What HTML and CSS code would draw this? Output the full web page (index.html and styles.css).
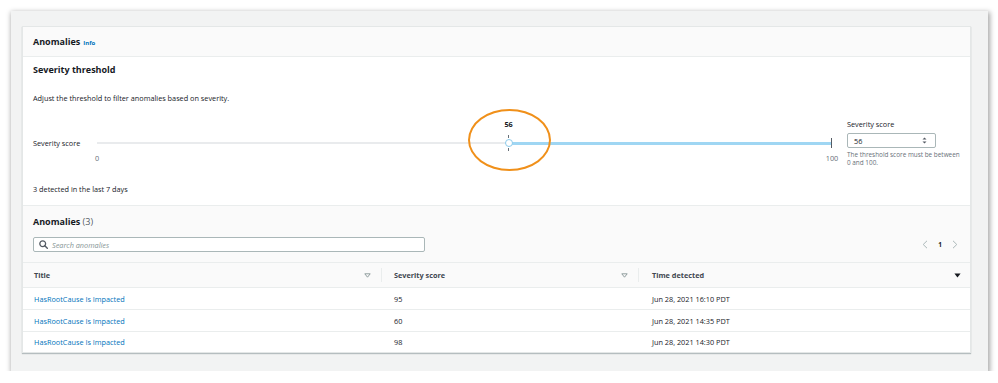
FILE: index.html
```html
<!DOCTYPE html>
<html lang="en">
<head>
    <meta charset="UTF-8">
    <meta name="viewport" content="width=device-width, initial-scale=1.0">
    <title>Anomalies</title>
    <link rel="stylesheet" href="styles.css">
</head>
<body>
    <div class="frame">
        <div class="card">
            <div class="card-header">
                <h2>Anomalies</h2>
                <a href="#" class="info">Info</a>
            </div>

            <div class="threshold">
                <h3>Severity threshold</h3>
                <p class="desc">Adjust the threshold to filter anomalies based on severity.</p>

                <div class="slider-row">
                    <div class="slider-label">Severity score</div>
                    <div class="slider">
                        <div class="value-row">
                            <span class="value" style="left: 56%;">56</span>
                        </div>
                        <div class="track">
                            <div class="track-fill" style="left: 56%;"></div>
                            <div class="thumb" style="left: 56%;"></div>
                            <div class="callout" style="left: 56%;"></div>
                        </div>
                        <div class="ends">
                            <span class="min">0</span>
                            <span class="max">100</span>
                        </div>
                    </div>
                    <div class="score-field">
                        <label>Severity score</label>
                        <div class="number-input">
                            <span>56</span>
                            <svg width="5" height="7" viewBox="0 0 5 7">
                                <path d="M2.5 0.5 L4.5 2.6 H0.5 Z M2.5 6.5 L4.5 4.4 H0.5 Z" fill="#545b64"/>
                            </svg>
                        </div>
                        <p class="hint">The threshold score must be between 0 and 100.</p>
                    </div>
                </div>

                <p class="detected">3 detected in the last 7 days</p>
            </div>

            <div class="table-tools">
                <h2>Anomalies <span class="count">(3)</span></h2>
                <div class="tools-row">
                    <div class="search">
                        <svg width="9" height="9" viewBox="0 0 9 9">
                            <circle cx="3.7" cy="3.7" r="2.9" fill="none" stroke="#545b64" stroke-width="1.3"/>
                            <path d="M5.8 5.8 L8.3 8.3" stroke="#545b64" stroke-width="1.4" stroke-linecap="round"/>
                        </svg>
                        <span>Search anomalies</span>
                    </div>
                    <div class="pager">
                        <svg width="6" height="9" viewBox="0 0 6 9"><path d="M5 0.8 L1.2 4.5 L5 8.2" fill="none" stroke="#aab7b8" stroke-width="1"/></svg>
                        <span>1</span>
                        <svg width="6" height="9" viewBox="0 0 6 9"><path d="M1 0.8 L4.8 4.5 L1 8.2" fill="none" stroke="#aab7b8" stroke-width="1"/></svg>
                    </div>
                </div>
            </div>

            <div class="grid">
                <div class="grid-row grid-head">
                    <div class="th">Title
                        <svg width="7" height="5" viewBox="0 0 7 5"><path d="M0.8 0.8 H6.2 L3.5 4.2 Z" fill="none" stroke="#879596" stroke-width="0.9"/></svg>
                    </div>
                    <div class="th">Severity score
                        <svg width="7" height="5" viewBox="0 0 7 5"><path d="M0.8 0.8 H6.2 L3.5 4.2 Z" fill="none" stroke="#879596" stroke-width="0.9"/></svg>
                    </div>
                    <div class="th last">Time detected
                        <svg width="7" height="5" viewBox="0 0 7 5"><path d="M0.4 0.4 H6.6 L3.5 4.6 Z" fill="#16191f"/></svg>
                    </div>
                </div>
                <div class="grid-row">
                    <a href="#">HasRootCause Is Impacted</a>
                    <span>95</span>
                    <span>Jun 28, 2021 16:10 PDT</span>
                </div>
                <div class="grid-row">
                    <a href="#">HasRootCause Is Impacted</a>
                    <span>60</span>
                    <span>Jun 28, 2021 14:35 PDT</span>
                </div>
                <div class="grid-row">
                    <a href="#">HasRootCause Is Impacted</a>
                    <span>98</span>
                    <span>Jun 28, 2021 14:30 PDT</span>
                </div>
            </div>
        </div>
    </div>
</body>
</html>
```

FILE: styles.css
```css
body {
    margin: 0;
    background: #fff;
    font-family: "Open Sans", Arial, sans-serif;
    color: #16191f;
    font-size: 7.3px;
}
a {
    color: #0073bb;
    text-decoration: none;
}
h2, h3, p {
    margin: 0;
}
.frame {
    box-sizing: border-box;
    width: 977px;
    height: 360px;
    margin: 11px 0 0 11px;
    padding: 15px 17px 18px 11px;
    background: #f2f3f3;
    box-shadow: 1px 2px 5px 1px rgba(0, 0, 0, 0.35);
}
.card {
    box-sizing: border-box;
    height: 327px;
    background: #fff;
    border: 1px solid #e4e7e7;
    box-shadow: 0 1px 1px rgba(0, 28, 36, 0.25);
}
.card-header {
    box-sizing: border-box;
    height: 30px;
    display: flex;
    align-items: center;
    gap: 3px;
    padding: 1px 10px 0;
    background: #fafafa;
    border-bottom: 1px solid #eaeded;
}
h2 {
    font-size: 9px;
    font-weight: 700;
    line-height: 14px;
}
.info {
    font-size: 6px;
    font-weight: 700;
    padding-top: 2px;
}
.threshold {
    box-sizing: border-box;
    height: 149px;
    padding: 6px 11px 0 10px;
    border-bottom: 1px solid #eaeded;
}
h3 {
    font-size: 9px;
    font-weight: 700;
    line-height: 14px;
}
.desc {
    margin-top: 15px;
    line-height: 12px;
}
.slider-row {
    display: flex;
    height: 58px;
    margin-top: 10px;
}
.slider-label {
    flex: 0 0 64px;
    align-self: center;
    line-height: 12px;
}
.slider {
    flex: 0 0 735px;
    display: flex;
    flex-direction: column;
}
.value-row {
    position: relative;
    height: 20px;
}
.value {
    position: absolute;
    top: 4px;
    transform: translateX(-50%);
    font-weight: 700;
    line-height: 12px;
}
.track {
    position: relative;
    height: 18px;
}
.track::before {
    content: "";
    position: absolute;
    left: 0;
    right: 0;
    top: 8px;
    height: 2px;
    background: #e9ebed;
}
.track::after {
    content: "";
    position: absolute;
    right: 0;
    top: 4px;
    width: 1.5px;
    height: 10px;
    background: #545b64;
}
.track-fill {
    position: absolute;
    right: 0;
    top: 7.5px;
    height: 3px;
    background: #9fd6f3;
}
.thumb {
    position: absolute;
    top: 5px;
    width: 6px;
    height: 6px;
    margin-left: -4px;
    border: 1px solid #8ccbec;
    border-radius: 50%;
    background: #fff;
}
.thumb::before,
.thumb::after {
    content: "";
    position: absolute;
    left: 2.5px;
    width: 1px;
    height: 3px;
    background: #687078;
}
.thumb::before {
    top: -5px;
}
.thumb::after {
    bottom: -5px;
}
.callout {
    position: absolute;
    top: -25px;
    width: 79px;
    height: 58px;
    margin-left: -41px;
    border: 2px solid #f0901a;
    border-radius: 50%;
}
.ends {
    display: flex;
    justify-content: space-between;
    height: 12px;
    line-height: 12px;
    color: #687078;
}
.ends .min {
    transform: translateX(-50%);
}
.ends .max {
    transform: translateX(50%);
}
.score-field {
    flex: 0 0 113px;
    margin-left: 15px;
    padding-top: 4px;
}
.score-field label {
    display: block;
    line-height: 12px;
}
.number-input {
    box-sizing: border-box;
    width: 89px;
    height: 15px;
    margin-top: 3px;
    display: flex;
    align-items: center;
    justify-content: space-between;
    padding: 0 8px 0 6px;
    border: 1px solid #aab7b8;
    border-radius: 2px;
}
.hint {
    margin-top: 3px;
    font-size: 6.4px;
    line-height: 8px;
    color: #687078;
}
.detected {
    margin-top: 11px;
    line-height: 12px;
}
.table-tools {
    box-sizing: border-box;
    height: 56px;
    padding: 9px 12px 0 10px;
    background: #fafafa;
}
.count {
    font-weight: 400;
    color: #545b64;
}
.tools-row {
    display: flex;
    align-items: center;
    justify-content: space-between;
    margin-top: 8px;
}
.search {
    box-sizing: border-box;
    width: 392px;
    height: 15px;
    display: flex;
    align-items: center;
    gap: 4px;
    padding-left: 5px;
    background: #fff;
    border: 1px solid #aab7b8;
    border-radius: 2px;
    font-style: italic;
    color: #879596;
}
.pager {
    display: flex;
    align-items: center;
    gap: 10px;
    font-weight: 700;
    font-size: 6.5px;
}
.grid-row {
    box-sizing: border-box;
    display: grid;
    grid-template-columns: 359px 257px 1fr;
    align-items: center;
    height: 22px;
    border-bottom: 1px solid #eaeded;
}
.grid-row:last-child {
    border-bottom: none;
    height: 20px;
}
.grid-row > * {
    padding-left: 11px;
}
.grid-row > :nth-child(2) {
    padding-left: 12px;
}
.grid-row > :nth-child(3) {
    padding-left: 13px;
}
.grid-head {
    height: 26px;
    background: #fafafa;
    border-top: 1px solid #eaeded;
    font-weight: 700;
    color: #414750;
}
.th {
    display: flex;
    align-items: center;
    justify-content: space-between;
    height: 14px;
    padding-right: 10px;
    border-right: 1px solid #eaeded;
}
.th.last {
    border-right: none;
    padding-right: 9px;
}
```
